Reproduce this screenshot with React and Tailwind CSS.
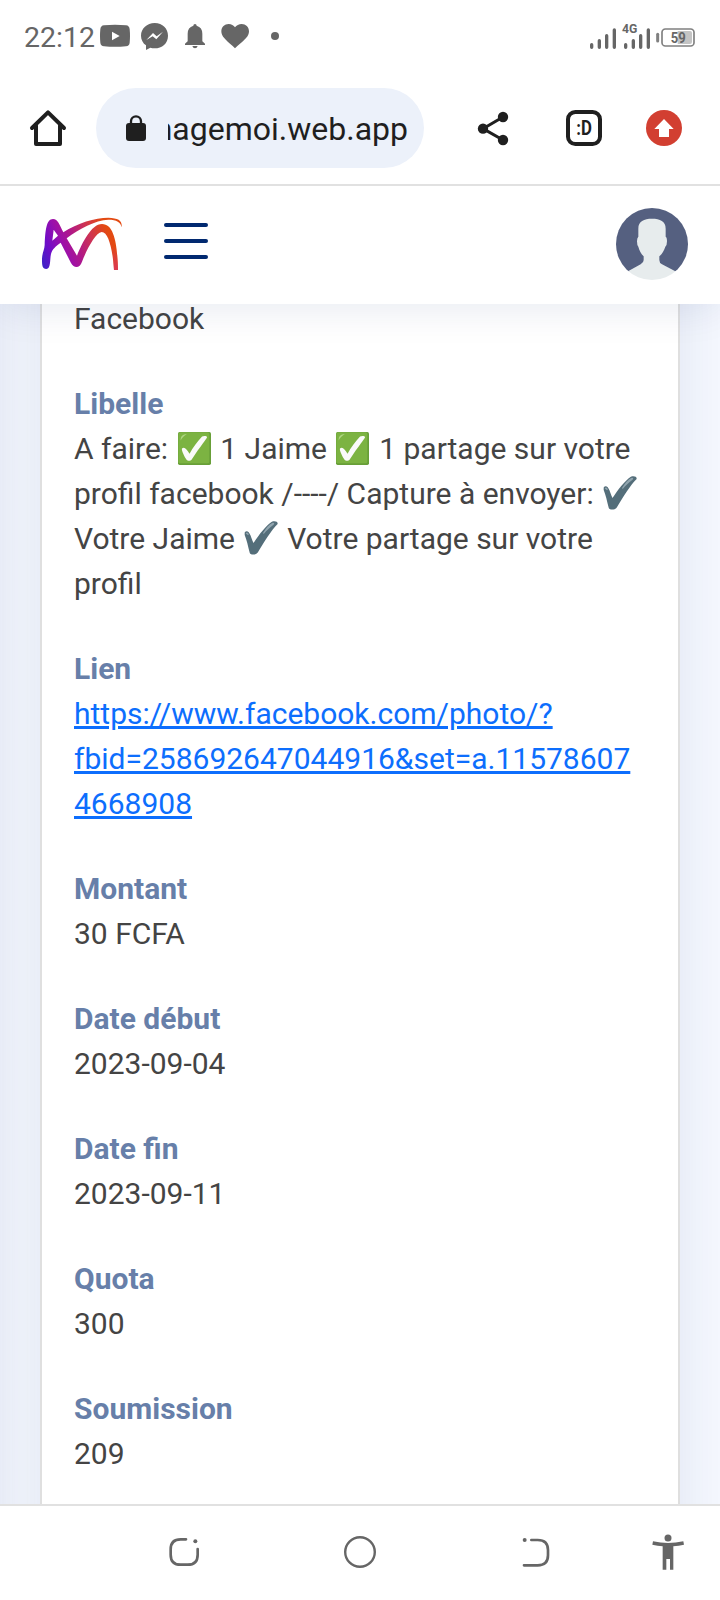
const fields = [
  { label: "Montant", value: "30 FCFA" },
  { label: "Date début", value: "2023-09-04" },
  { label: "Date fin", value: "2023-09-11" },
  { label: "Quota", value: "300" },
  { label: "Soumission", value: "209" },
]

const CheckBoxEmoji = () => (
  <svg viewBox="0 0 100 100" className="inline-block w-[33px] h-[33px] ml-[2px] mr-[2.3px] align-[-6px]">
    <rect x="0" y="0" width="100" height="100" rx="5" fill="#689f38" />
    <rect x="1" y="1" width="94" height="94" rx="5" fill="#7cb342" />
    <path d="M8 26 C8 12 14 7 27 7 C20 11 12 17 8 26Z" fill="#aed581" />
    <path d="M12 50 C20 44 26 52 35 66 C45 48 60 28 73 14 C78 10 88 12 88 15 C88 20 68 42 41 84 C37 89 29 88 26 84 C20 76 10 56 12 50Z" fill="#fafafa" />
  </svg>
)

const CheckEmoji = () => (
  <svg viewBox="0 0 100 100" className="inline-block w-[34px] h-[34px] ml-[1.5px] mr-[1.8px] align-[-6px]">
    <path d="M2 34 C7 26 15 31 19 42 C22 50 24 56 28 65 C42 42 66 12 82 2 C90 -1 100 1 99 9 C80 28 60 60 41 92 C37 100 20 101 17 94 C12 75 8 55 2 41Z" fill="#546e7a" />
    <path d="M56 35 C64 22 74 10 83 6 C89 4 91 8 86 12 C76 20 66 29 58 38Z M5 37 C8 31 13 35 14 40 L12 42Z" fill="#90a4ae" />
  </svg>
)

const StatusBar = () => (
  <div className="flex h-[72px] items-center pl-[24px] pr-[24px] text-[#666666]">
    <span className="w-[76px] whitespace-nowrap pt-[4px] text-[28.5px] leading-none">22:12</span>
    <div className="flex gap-[10px]">
      <svg viewBox="300 63 90 90" className="h-[30px] w-[30px]" fill="currentColor">
        <path d="M312 76 Q345 73 378 76 Q388 77 389 88 Q391 108 389 128 Q388 138 378 139 Q345 142 312 139 Q302 138 301 128 Q299 108 301 88 Q302 77 312 76Z" />
        <path d="M336 95 L359 108 L336 121Z" fill="#fff" />
      </svg>
      <svg viewBox="420 63 90 90" className="h-[30px] w-[30px]" fill="currentColor">
        <path d="M464 69 C488 69 504 86 504 107 C504 130 486 145 464 145 C459 145 455 144 451 143 L438 150 V136 C429 130 423 119 423 107 C423 86 441 69 464 69Z" />
        <path d="M439 120 L459 99 L470 109 L489 95 L469 118 L458 109Z" fill="#fff" />
      </svg>
      <svg viewBox="540 63 90 90" className="h-[30px] w-[30px]" fill="currentColor">
        <path d="M580 77 Q580 72 585 72 Q590 72 590 77 Q607 82 607 101 V124 L615 131 V135 H555 V131 L563 124 V101 Q563 82 580 77Z M577 138 H593 Q591 145 585 145 Q579 145 577 138Z" />
      </svg>
      <svg viewBox="660 63 90 90" className="h-[30px] w-[30px]" fill="currentColor">
        <path d="M705 145 L698 138 C676 119 664 109 664 94 C664 81 674 72 686 72 C694 72 701 76 705 82 C709 76 717 72 725 72 C737 72 747 81 747 94 C747 109 735 119 712 138Z" />
      </svg>
      <svg viewBox="780 63 90 90" className="h-[30px] w-[30px]" fill="currentColor">
        <circle cx="825" cy="108" r="12" />
      </svg>
    </div>
    <svg viewBox="684 60 324 84" className="ml-auto h-[28px] w-[108px] overflow-visible">
      <g stroke="currentColor" strokeWidth="10" strokeLinecap="round">
        <path d="M695 128 V136 M718 116 V136 M740 101 V136 M763 84 V136" />
        <path d="M797 128 V136 M820 116 V136 M842 101 V136 M865 84 V136" />
      </g>
      <path d="M893 97 V117" stroke="#808080" strokeWidth="9" strokeLinecap="round" />
      <rect x="906" y="81" width="96" height="51" rx="10" fill="none" stroke="#808080" strokeWidth="5" />
      <path d="M953 87 H990 Q996 87 996 93 V119 Q996 126 990 126 H953Z" fill="#c4c4c4" />
      <text x="786" y="92" textLength="46" lengthAdjust="spacingAndGlyphs" fontSize="40" fontWeight="700" fill="currentColor">4G</text>
      <text x="932" y="123" textLength="45" lengthAdjust="spacingAndGlyphs" fontSize="46" fontWeight="700" fill="currentColor">59</text>
    </svg>
  </div>
)

const BrowserBar = () => (
  <div className="flex h-[114px] items-center border-b-2 border-[#e1e1e1] pl-[28px] text-[#1f1f1f]">
    <svg viewBox="84 324 120 120" className="h-[40px] w-[40px]" fill="none" stroke="currentColor" strokeWidth="12" strokeLinecap="round" strokeLinejoin="round">
      <path d="M96 384 L144 337 L192 384 M108 376 V432 H180 V376" />
    </svg>
    <div className="ml-[28px] flex h-[80px] w-[328px] items-center rounded-full bg-[#ecf1fa] pl-[28px]">
      <svg viewBox="372 342 72 84" className="h-[28px] w-[24px]">
        <rect x="378" y="369" width="60" height="54" rx="9" fill="currentColor" />
        <path d="M393 374 V364 A15 15 0 0 1 423 364 V374" fill="none" stroke="currentColor" strokeWidth="7" />
      </svg>
      <div className="ml-[20px] flex w-[240px] justify-end overflow-hidden pt-[2px]">
        <span className="whitespace-nowrap text-[32px] leading-[40px]">managemoi.web.app</span>
      </div>
    </div>
    <svg viewBox="348 330 102 108" className="ml-[52px] h-[36px] w-[34px]" fill="currentColor">
      <path d="M429 351 L369 386 L429 420" fill="none" stroke="currentColor" strokeWidth="9" />
      <circle cx="429" cy="351" r="15.500" />
      <circle cx="369" cy="386" r="15.500" />
      <circle cx="429" cy="420" r="15.500" />
    </svg>
    <svg viewBox="618 330 108 108" className="ml-[56px] h-[36px] w-[36px]">
      <rect x="624" y="336" width="96" height="96" rx="22" fill="none" stroke="currentColor" strokeWidth="12" />
      <text x="649" y="405" textLength="47" lengthAdjust="spacingAndGlyphs" fontSize="58" fontWeight="700" fill="currentColor">:D</text>
    </svg>
    <svg viewBox="858 330 108 108" className="ml-[44px] h-[36px] w-[36px]">
      <circle cx="912" cy="384" r="54" fill="#d23f31" />
      <path d="M912 357 L941 387 H927 V411 H897 V387 H883Z" fill="#fff" />
    </svg>
  </div>
)

const Logo = () => (
  <svg viewBox="120 108 252 168" className="h-[56px] w-[84px]">
    <defs>
      <linearGradient id="brand" gradientUnits="userSpaceOnUse" x1="128" y1="252" x2="340" y2="160">
        <stop offset="0" stopColor="#3f22c6" />
        <stop offset="0.16" stopColor="#6f0cc8" />
        <stop offset="0.34" stopColor="#9c10aa" />
        <stop offset="0.5" stopColor="#b01888" />
        <stop offset="0.72" stopColor="#cf3450" />
        <stop offset="0.94" stopColor="#e34a12" />
        <stop offset="1" stopColor="#e34a12" />
      </linearGradient>
      <linearGradient id="brandFoot" gradientUnits="userSpaceOnUse" x1="0" y1="200" x2="0" y2="268">
        <stop offset="0" stopColor="#dc3a50" stopOpacity="0" />
        <stop offset="1" stopColor="#dc3a50" />
      </linearGradient>
    </defs>
    <path
      fill="url(#brand)"
      fillRule="evenodd"
      d="M126 240 C126 218 133 212 134 195 C136 150 139 117 159 117 C174 117 178 134 190 157 C232 129 285 113 325 113 C356 114 367 122 365 142 C362 127 350 119 325 119 C285 121 238 146 200 175 L231 227 C246 190 274 132 306 132 C345 132 352 200 354 270 H342 C338 210 326 156 305 156 C287 158 262 205 246 245 C240 265 222 266 213 249 L182 188 C168 198 156 208 153 222 C149 240 153 267 139 267 C127 267 126 255 126 240Z M161 149 L157 182 L174 167Z"
    />
    <path fill="url(#brandFoot)" d="M335 190 L346 190 C351 215 353 240 354 270 H342 C341 240 339 215 335 190Z" />
  </svg>
)

const SiteHeader = () => (
  <header className="relative z-10 flex h-[118px] items-center bg-white pb-[2px] pl-[40px] pr-[32px] shadow-[0_4px_40px_rgba(1,41,112,0.1)]">
    <Logo />
    <div className="ml-[40px] flex w-[44px] flex-col gap-[12px] pb-[6px]">
      <div className="h-[4px] rounded-full bg-[#012970]" />
      <div className="h-[4px] rounded-full bg-[#012970]" />
      <div className="h-[4px] rounded-full bg-[#012970]" />
    </div>
    <div className="ml-auto h-[72px] w-[72px] overflow-hidden rounded-full">
      <svg viewBox="168 84 216 216" className="h-full w-full">
        <rect x="168" y="84" width="216" height="190" fill="#556080" />
        <path d="M276 116 C300 116 317 123 317 146 V170 Q321 172 321 184 Q321 196 316 200 C312 212 306 222 298 229 V240 Q298 249 306 253 L346 274 V304 H204 V274 L242 253 Q251 248 251 240 V229 C244 222 238 212 235 200 Q231 196 231 184 Q231 173 235 170 V146 C235 123 252 116 276 116Z" fill="#e7eced" />
      </svg>
    </div>
  </header>
)

const Field = ({ label, children }) => (
  <div>
    <div className="font-bold text-[#677fa9]">{label}</div>
    <div>{children}</div>
  </div>
)

const BottomNav = () => (
  <nav className="flex h-[96px] items-center border-t-2 border-[#e1e1e1] bg-white pb-[2px] pl-[167px] text-[#666666]">
    <svg viewBox="501 165 102 102" className="h-[34px] w-[34px]" fill="none" stroke="currentColor" strokeWidth="8" strokeLinecap="round">
      <path d="M558 178 H542 Q512 178 512 208 V224 Q512 254 542 254 H563 Q593 254 593 224 V207" />
      <circle cx="586" cy="184" r="6" fill="currentColor" stroke="none" />
    </svg>
    <svg viewBox="0 0 34 34" className="ml-[142px] h-[34px] w-[34px]" fill="none" stroke="currentColor" strokeWidth="2.400">
      <circle cx="17" cy="17" r="14.800" />
    </svg>
    <svg viewBox="480 165 96 102" className="ml-[143px] h-[34px] w-[32px]" fill="none" stroke="currentColor" strokeWidth="8" strokeLinecap="round">
      <path d="M514 180 H533 Q564 180 564 210 V226 Q564 256 533 256 H492" />
      <circle cx="494" cy="180" r="6" fill="currentColor" stroke="none" />
    </svg>
    <svg viewBox="873 159 102 114" className="ml-[99px] h-[38px] w-[34px]" fill="currentColor">
      <circle cx="924" cy="174" r="10.500" />
      <path d="M879 184 Q924 194 970 184 L972 194 Q956 198 940 199 V269 H930 V237 H919 V269 H908 V199 Q893 198 877 194Z" />
    </svg>
  </nav>
)

const App = () => {
  return (
    <div className="h-[1600px] w-[720px] overflow-hidden bg-white font-[Roboto,sans-serif]">
      {/* stays above the site header so its shadow only falls downwards */}
      <div className="relative z-20 bg-white">
        <StatusBar />
        <BrowserBar />
      </div>
      <SiteHeader />

      <main className="relative h-[1200px] overflow-hidden bg-[#f6f9ff] px-[40px] text-[30px] leading-[45px] text-[#444444]">
        {/* edge shadow of the collapsed sidebar */}
        <div className="absolute -left-[40px] -top-[60px] h-[1320px] w-[40px] shadow-[0_0_40px_rgba(1,41,112,0.1)]" />
        <div className="-mt-[60px] flex h-[1360px] flex-col gap-[40px] border-x-2 border-[#dfdfdf] bg-white pl-[32px] pt-[52px] shadow-[0_0_60px_rgba(1,41,112,0.1)]">
          <div>Facebook</div>
          <Field label="Libelle">
            <div className="h-[45px] whitespace-nowrap">A faire: <CheckBoxEmoji /> 1 Jaime <CheckBoxEmoji /> 1 partage sur votre</div>
            <div className="h-[45px] whitespace-nowrap">profil facebook /----/ Capture à envoyer: <CheckEmoji /></div>
            <div className="h-[45px] whitespace-nowrap">Votre Jaime <CheckEmoji /> Votre partage sur votre</div>
            <div className="h-[45px]">profil</div>
          </Field>
          <Field label="Lien">
            <a href="#" className="text-[#0d6efd] underline">
              https://www.facebook.com/photo/?<br />
              fbid=258692647044916&amp;set=a.11578607<br />
              4668908
            </a>
          </Field>
          {fields.map((field) => (
            <Field key={field.label} label={field.label}>{field.value}</Field>
          ))}
        </div>
      </main>

      <BottomNav />
    </div>
  )
}

export default App
